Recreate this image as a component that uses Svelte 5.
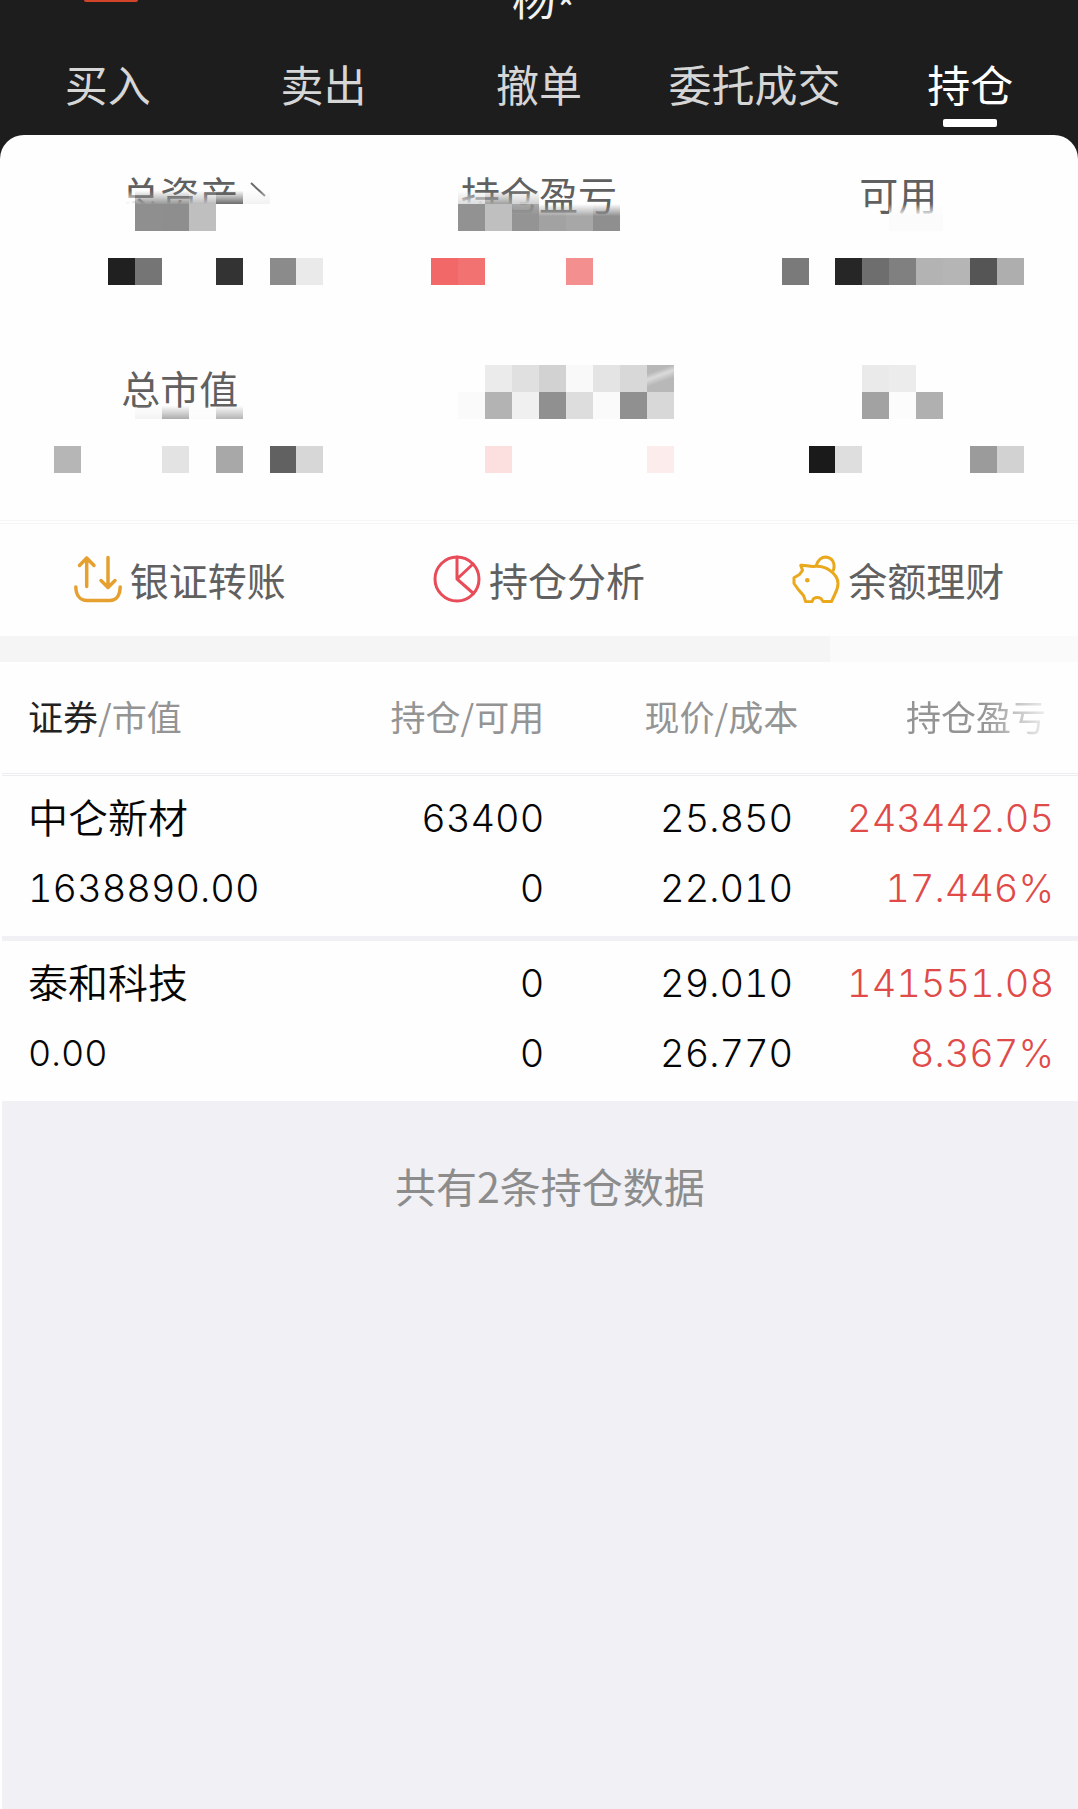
<script>
  const tabs = ['买入', '卖出', '撤单', '委托成交', '持仓'];
  let active = $state('持仓');

  // Masked account figures: [column, row, colour, fade] on a 40-column grid.
  const labelMaskA = [
    [4, 1, '#fefefe', 'low'], [5, 1, '#989898', 'low'], [6, 1, '#989898', 'low'],
    [7, 1, '#bbbbbb', 'low'], [8, 1, '#6c6c6c', 'low'], [9, 1, '#f2f2f2', 'low'],
    [4, 2, '#fefefe'], [5, 2, '#8f8f8f'], [6, 2, '#8e8e8e'], [7, 2, '#bfbfbf'],
    [8, 2, '#fefefe'], [9, 2, '#fefefe'],
    [17, 1, '#dddddd', 'low'], [18, 1, '#a0a0a0', 'low'], [19, 1, '#d0d0d0', 'low'],
    [17, 2, '#929292'], [18, 2, '#bfbfbf'], [19, 2, '#949494', 'thin'],
    [20, 2, '#a2a2a2', 'top'], [21, 2, '#a7a7a7', 'top'], [22, 2, '#8f8f8f', 'top'],
    [33, 2, '#fbfbfb', 'top'], [34, 2, '#fbfbfb', 'top']
  ];
  const valueMaskA = [
    [4, 1, '#202020'], [5, 1, '#757575'], [8, 1, '#333333'], [10, 1, '#8b8b8b'], [11, 1, '#eaeaea'],
    [16, 1, '#f26868'], [17, 1, '#f27272'], [21, 1, '#f48f8f'],
    [29, 1, '#7a7a7a'], [31, 1, '#262626'], [32, 1, '#6e6e6e'], [33, 1, '#808080'],
    [34, 1, '#b3b3b3'], [35, 1, '#b5b5b5'], [36, 1, '#555555'], [37, 1, '#aeaeae']
  ];
  const labelMaskB = [
    [5, 2, '#f3f3f3', 'low'], [6, 2, '#acacac', 'low'], [7, 2, '#fbfbfb', 'low'], [8, 2, '#b4b4b4', 'low'],
    [18, 1, '#ebebeb'], [19, 1, '#e0e0e0'], [20, 1, '#d2d2d2'], [21, 1, '#f9f9f9'],
    [22, 1, '#e4e4e4'], [23, 1, '#d8d8d8'], [24, 1, '#b8b8b8', 'shine'],
    [17, 2, '#fafafa'], [18, 2, '#b3b3b3'], [19, 2, '#f0f0f0'], [20, 2, '#909090'],
    [21, 2, '#dddddd'], [22, 2, '#fafafa'], [23, 2, '#909090'], [24, 2, '#d8d8d8'],
    [32, 1, '#eaeaea'], [33, 1, '#ececec'], [32, 2, '#a2a2a2'], [33, 2, '#fcfcfc'], [34, 2, '#b0b0b0']
  ];
  const valueMaskB = [
    [2, 1, '#b6b6b6'], [6, 1, '#e3e3e3'], [8, 1, '#a8a8a8'], [10, 1, '#616161'], [11, 1, '#d7d7d7'],
    [18, 1, '#fce0e0'], [24, 1, '#fdecec'],
    [30, 1, '#1a1a1a'], [31, 1, '#dedede'], [36, 1, '#9b9b9b'], [37, 1, '#d2d2d2']
  ];

  const holdings = [
    { name: '中仑新材', value: '1638890.00', held: '63400', usable: '0', price: '25.850', cost: '22.010', gain: '243442.05', rate: '17.446%' },
    { name: '泰和科技', value: '0.00', held: '0', usable: '0', price: '29.010', cost: '26.770', gain: '141551.08', rate: '8.367%' }
  ];
</script>

{#snippet mask(cells, over)}
  <div class="mask" class:over aria-hidden="true">
    {#each cells as [col, row, colour, fade]}
      <i class={fade} style:grid-column={col + 1} style:grid-row={row} style:background-color={colour}></i>
    {/each}
  </div>
{/snippet}

<div class="app">
  <header>
    <div class="account">
      <span class="badge"></span>
      <span class="user">杨<span class="star">*</span></span>
    </div>
    <nav>
      {#each tabs as tab}
        <button class="tab" class:active={tab === active} onclick={() => (active = tab)}>{tab}</button>
      {/each}
    </nav>
  </header>

  <main>
    <section class="summary">
      <div class="labels">
        <span><b>总资产<svg class="chev" viewBox="0 0 16 16"><path d="M1 2L15 15" /></svg></b></span>
        <span><b>持仓盈亏</b></span>
        <span><b>可用</b></span>
        {@render mask(labelMaskA, true)}
      </div>
      {@render mask(valueMaskA, false)}
      <div class="labels second">
        <span><b>总市值</b></span>
        {@render mask(labelMaskB, true)}
      </div>
      {@render mask(valueMaskB, false)}
    </section>

    <section class="actions">
      <button>
        <svg viewBox="0 0 48 48" class="gold">
          <path d="M12.7 31.5V3M5.5 10.5L12.7 3L20 10.5M34 2.5V32M27 25.5L34 32.5L41 25.5" />
          <path d="M1.8 32C2 40 6 45.500 13 45.500H36C42.500 45.500 46 40 46.200 32" />
        </svg>
        银证转账
      </button>
      <button>
        <svg viewBox="0 0 48 48" class="red">
          <circle cx="24" cy="24" r="22" />
          <path d="M24 2V24L40 9M24 24L40.500 38.500" />
        </svg>
        持仓分析
      </button>
      <button>
        <svg viewBox="0 0 48 48" class="yellow">
          <path d="M8.700 10.300C13 9.500 17 12 23.700 11.300C30 11 34 12.500 38 15.500C43 19 46 23.500 46 28.500C46 33 44.500 36 43 39L39.500 46.500H31L29 43.500C27 42.500 23.500 42.500 21.500 43.700L20 46.700H13.700L11.500 40.500L6.300 34.500L2 28.500V22.700L7.500 19.500L10.500 15.300Z" />
          <path d="M24.300 10.500C26 5 30 2 34 2C40 2.500 43.500 8 41.500 15" />
          <circle class="eye" cx="15.300" cy="25.300" r="2.300" />
        </svg>
        余额理财
      </button>
    </section>

    <div class="band"></div>

    <table>
      <colgroup>
        <col class="c1" /><col class="c2" /><col class="c3" /><col class="c4" />
      </colgroup>
      <thead>
        <tr>
          <th scope="col"><em>证券</em>/市值</th>
          <th scope="col">持仓/可用</th>
          <th scope="col">现价/成本</th>
          <th scope="col"><span class="fading">持仓盈亏</span></th>
        </tr>
      </thead>
      {#each holdings as h}
        <tbody>
          <tr class="first">
            <td class="name">{h.name}</td>
            <td>{h.held}</td>
            <td class="price">{h.price}</td>
            <td class="up">{h.gain}</td>
          </tr>
          <tr class="last">
            <td class:small={h.value === '0.00'}>{h.value}</td>
            <td>{h.usable}</td>
            <td class="price">{h.cost}</td>
            <td class="up">{h.rate}</td>
          </tr>
        </tbody>
      {/each}
    </table>

    <p class="count">共有{holdings.length}条持仓数据</p>
  </main>
</div>

<style>
  :global(body) {
    background: #1d1d1d;
  }
  .app {
    min-height: 100vh;
    display: flex;
    flex-direction: column;
    background: #1d1d1d;
    font-family: 'Noto Sans CJK SC', sans-serif;
  }
  button {
    border: 0;
    padding: 0;
    background: none;
    font-family: inherit;
    cursor: pointer;
  }
  .account {
    height: 22px;
    display: grid;
    grid-template: 22px / 1fr auto 1fr;
    align-items: end;
    padding-left: 10px;
  }
  .badge {
    align-self: start;
    width: 54px;
    height: 2px;
    margin-left: 74px;
    border-radius: 0 0 8px 8px;
    background: #d2442a;
  }
  .user {
    height: 44px;
    margin-top: -26px;
    margin-bottom: 3px;
    font-size: 44px;
    line-height: 44px;
    color: #f2f2f2;
  }
  .star {
    line-height: 0;
    vertical-align: sub;
  }
  nav {
    display: grid;
    grid-template-columns: repeat(5, 1fr);
    padding: 29px 0 8px;
  }
  .tab {
    display: flex;
    flex-direction: column;
    align-items: center;
    gap: 4px;
    font-size: 43px;
    line-height: 64px;
    color: #d6d6d6;
    white-space: nowrap;
  }
  .tab::after {
    content: '';
    width: 54px;
    height: 8px;
    border-radius: 2px;
  }
  .active {
    color: #fff;
  }
  .active::after {
    background: #fff;
  }

  main {
    flex: 1;
    display: flex;
    flex-direction: column;
    background: #fefefe;
    border-radius: 24px 24px 0 0;
  }
  .summary {
    padding: 42px 0 47px;
    border-bottom: 4px double #f6f6f6;
  }
  .labels {
    position: relative;
    display: grid;
    grid-template-columns: repeat(3, 1fr);
    height: 54px;
    margin-bottom: 27px;
    font-size: 39px;
    line-height: 32px;
    color: #606060;
    text-align: center;
  }
  .second {
    margin-top: 80px;
    line-height: 44px;
  }
  .labels b {
    position: relative;
    font-weight: 400;
  }
  .chev {
    position: absolute;
    left: 100%;
    top: 50%;
    width: 16px;
    height: 16px;
    margin: -12px 0 0 12px;
    fill: none;
    stroke: #6c6c6c;
    stroke-width: 2;
  }
  .mask {
    display: grid;
    grid-template-columns: repeat(40, 1fr);
    grid-auto-rows: 27px;
  }
  .over {
    position: absolute;
    inset: 0;
  }
  .low {
    mask-image: linear-gradient(transparent 50%, #000);
  }
  .top {
    mask-image: linear-gradient(transparent, #000 45%);
  }
  .thin {
    mask-image: linear-gradient(rgba(0, 0, 0, 0.8), #000 40%);
  }
  .shine {
    background-image: linear-gradient(160deg, transparent 25%, #dadada 40%, transparent 60%);
  }

  .actions {
    display: grid;
    grid-template-columns: repeat(3, 1fr);
    height: 112px;
  }
  .actions button {
    display: flex;
    align-items: center;
    justify-content: center;
    gap: 8px;
    padding-bottom: 3px;
    font-size: 39px;
    line-height: 56px;
    color: #606060;
  }
  .actions svg {
    width: 48px;
    height: 48px;
    fill: none;
    stroke-width: 3;
    stroke-linecap: round;
    stroke-linejoin: round;
  }
  .red {
    stroke: #e84c58;
  }
  .actions .gold {
    stroke: #e6a030;
    stroke-width: 3.5;
  }
  .yellow {
    stroke: #eaa81c;
  }
  .eye {
    fill: #eaa81c;
    stroke: none;
  }
  .band {
    height: 26px;
    background: linear-gradient(to right, #f5f5f5 77%, #fafafa 77%);
  }

  table {
    table-layout: fixed;
    width: calc(100% - 2px);
    margin-left: 2px;
    border-spacing: 0;
  }
  .c1 { width: 30.4%; }
  .c2 { width: 20%; }
  .c3 { width: 23.6%; }
  .c4 { width: 26%; }
  th,
  td {
    padding: 0;
    text-align: right;
    white-space: nowrap;
  }
  th {
    height: 107px;
    padding-bottom: 4px;
    border-bottom: 3px double #ececf1;
    font-size: 35px;
    line-height: 48px;
    font-weight: 400;
    color: #949494;
  }
  th:first-child,
  td:first-child {
    padding-left: 26px;
    text-align: left;
  }
  th:last-child {
    padding-right: 32px;
  }
  th em {
    font-style: normal;
    color: #222;
  }
  .fading {
    mask-image: linear-gradient(to right, #000 55%, rgba(0, 0, 0, 0.15));
  }
  td {
    height: 70px;
    font-family: Inter, 'Noto Sans CJK SC', sans-serif;
    font-size: 38px;
    font-variant-numeric: tabular-nums;
    line-height: 70px;
    font-weight: 350;
    color: #050505;
  }
  .first td {
    padding-top: 7px;
  }
  .last td {
    padding-bottom: 13px;
  }
  tbody + tbody .first td {
    border-top: 5px solid #f0f0f5;
  }
  td.name {
    font-family: 'Noto Sans CJK SC', sans-serif;
    font-size: 40px;
    line-height: 66px;
    vertical-align: top;
  }
  td.small {
    font-size: 36px;
  }
  td.price {
    padding-right: 5px;
  }
  td:last-child {
    padding-right: 24px;
  }
  td.up {
    color: #e04a48;
  }
  .count {
    flex: 1;
    margin: 0 0 0 2px;
    padding: 54px 0 0 20px;
    background: #f0f0f5;
    font-size: 41px;
    line-height: 60px;
    text-align: center;
    color: #8c8c8c;
  }
</style>
